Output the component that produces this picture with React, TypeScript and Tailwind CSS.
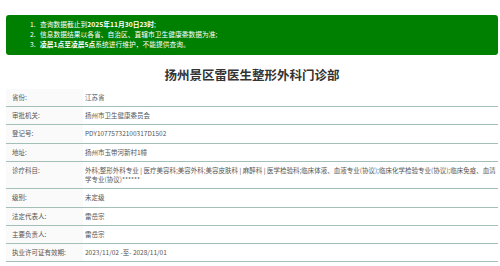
const notices = [
  { n: '1.', parts: [{ t: '查询数据截止到' }, { t: '2025年11月30日23时', b: true }, { t: ';' }] },
  { n: '2.', parts: [{ t: '信息数据结果以各省、自治区、直辖市卫生健康委数据为准;' }] },
  { n: '3.', parts: [{ t: '凌晨1点至凌晨5点', b: true }, { t: '系统进行维护，不能提供查询。' }] },
];

const rows = [
  { label: '省份:', value: '江苏省' },
  { label: '审批机关:', value: '扬州市卫生健康委员会' },
  { label: '登记号:', value: 'PDY10775732100317D1502' },
  { label: '地址:', value: '扬州市玉带河新村1幢' },
  {
    label: '诊疗科目:',
    value:
      '外科;整形外科专业 | 医疗美容科;美容外科;美容皮肤科 | 麻醉科 | 医学检验科;临床体液、血液专业(协议);临床化学检验专业(协议);临床免疫、血清学专业(协议)******',
  },
  { label: '级别:', value: '未定级' },
  { label: '法定代表人:', value: '雷岳宗' },
  { label: '主要负责人:', value: '雷岳宗' },
  { label: '执业许可证有效期:', value: '2023/11/02 -至- 2028/11/01' },
];

export default function App() {
  return (
    <div className="h-[266px] w-[500px] overflow-hidden bg-white pl-[6px] pr-[2px] pt-[15px] font-['Noto_Sans_CJK_SC',sans-serif]">
      <div className="rounded-[3px] bg-[#008000] pb-[6px] pl-[24px] pt-[4px] text-[6.75px] leading-[10px] text-white">
        {notices.map((item) => (
          <div key={item.n} className="flex">
            <span className="w-[10px]">{item.n}</span>
            <span>
              {item.parts.map((p, i) => (
                <span key={i} className={p.b ? 'font-bold' : ''}>
                  {p.t}
                </span>
              ))}
            </span>
          </div>
        ))}
      </div>

      <h1 className="mt-[10px] h-[20px] text-center text-[12.5px] font-bold leading-[20px] text-[#333]">
        扬州景区雷医生整形外科门诊部
      </h1>

      <div className="mt-[3.75px] text-[6.5px] leading-[9.25px] text-[#555]">
        {rows.map((row) => (
          <div key={row.label} className="flex border-b border-[#a3bfb7]">
            <div className="w-[77px] shrink-0 bg-[#fafafa] py-[4px] pl-[6px]">{row.label}</div>
            <div className="flex-1 py-[4px] pl-[2px] pr-[1px]">{row.value}</div>
          </div>
        ))}
      </div>
    </div>
  );
}
